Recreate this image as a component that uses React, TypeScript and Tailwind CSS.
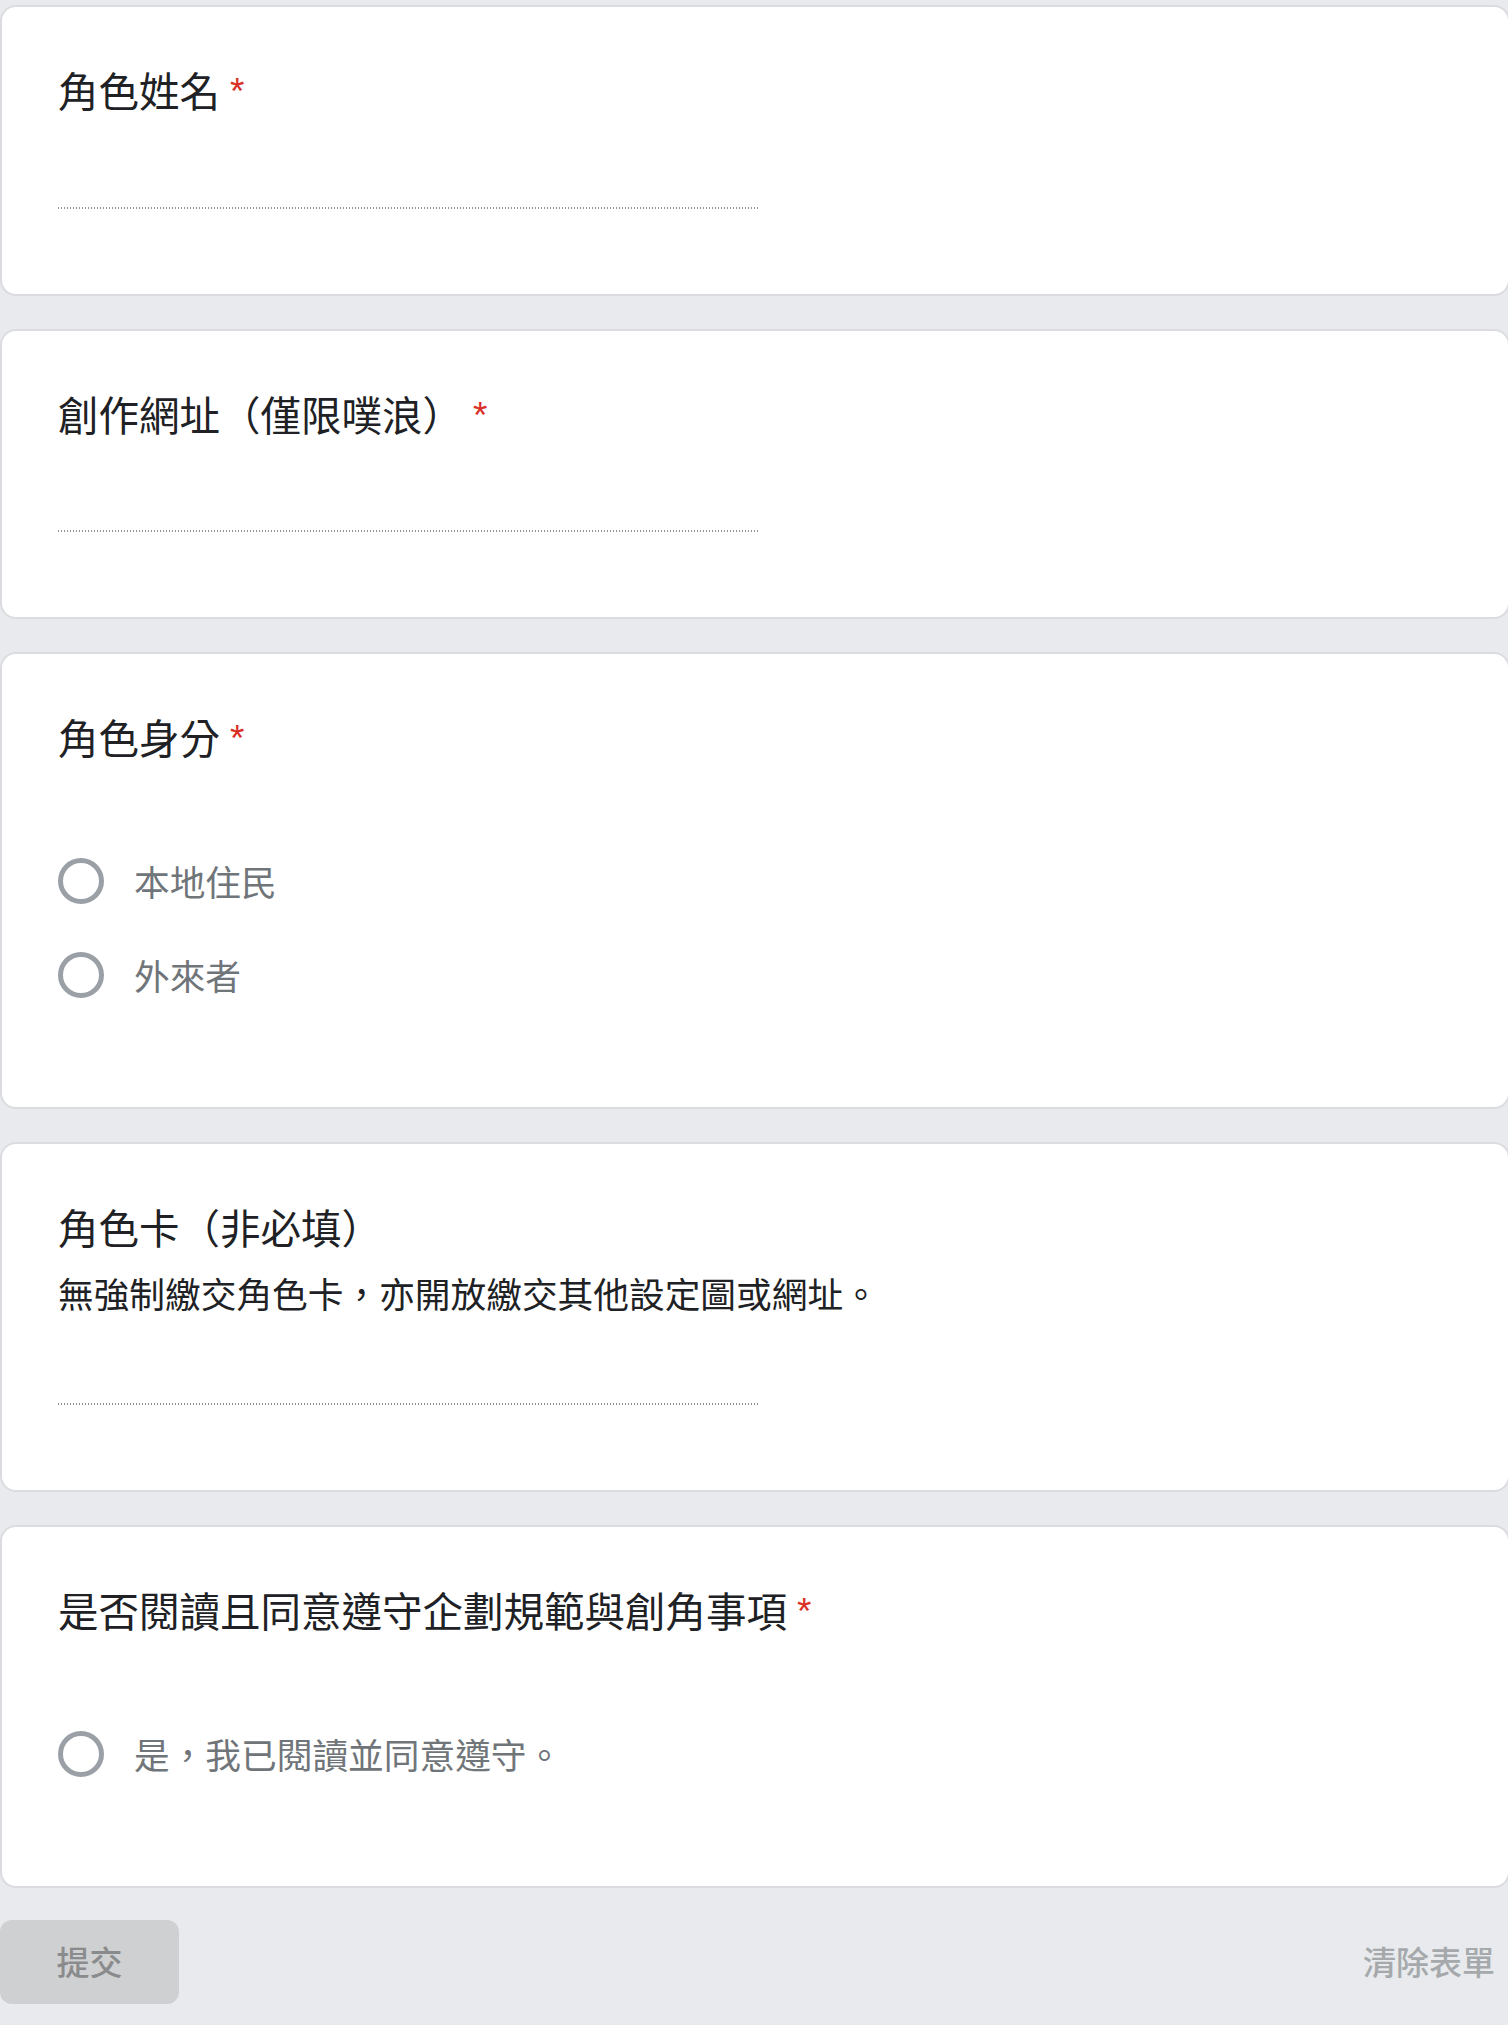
import React from "react";

const FONT = { fontFamily: '"Noto Sans CJK TC", "Noto Sans", sans-serif' };

function Title({ text, required }: { text: string; required?: boolean }) {
  return (
    <div className="text-[40.5px] leading-[48px] text-[#202124] whitespace-nowrap">
      {text}
      {required && (
        <span className="text-[#d93025] text-[37px] align-top pl-[10px] relative top-[2px]" style={{ fontFamily: '"Liberation Sans", sans-serif' }}>*</span>
      )}
    </div>
  );
}

function Card({ children }: { children: React.ReactNode }) {
  return (
    <div className="bg-white border-2 border-[#dadce0] rounded-[16px] mr-[-2px] pl-[56px] pr-[56px] pt-[59px] pb-[85px]">
      {children}
    </div>
  );
}

function TextInput({ h }: { h: string }) {
  return (
    <div className={`${h} flex items-end`}>
      <div className="w-[700px] h-[2px] bg-[linear-gradient(to_right,#8e9296_50%,transparent_50%)] bg-[length:3px_2px]" />
    </div>
  );
}

function Radio({ label }: { label: string }) {
  return (
    <div className="h-[94px] flex items-center">
      <div className="w-[46px] h-[46px] rounded-full border-[5px] border-[#9aa0a6] shrink-0" />
      <div className="ml-[30px] text-[35.7px] leading-[44px] text-[#70757a] whitespace-nowrap">{label}</div>
    </div>
  );
}

export default function App() {
  return (
    <div className="w-[1508px] min-h-[2025px] bg-[#e8eaed] pt-[5px] overflow-hidden" style={FONT}>
      <div className="flex flex-col gap-[33px]">
        <Card>
          <Title text="角色姓名" required />
          <TextInput h="h-[95px]" />
        </Card>
        <Card>
          <Title text="創作網址（僅限噗浪）" required />
          <TextInput h="h-[94px]" />
        </Card>
        <Card>
          <Title text="角色身分" required />
          <div className="mt-[73px]">
            <Radio label="本地住民" />
            <Radio label="外來者" />
          </div>
        </Card>
        <Card>
          <Title text="角色卡（非必填）" />
          <div className="mt-[20px] text-[35.7px] leading-[44px] text-[#202124] whitespace-nowrap">
            無強制繳交角色卡，亦開放繳交其他設定圖或網址。
          </div>
          <TextInput h="h-[90px]" />
        </Card>
        <Card>
          <Title text="是否閱讀且同意遵守企劃規範與創角事項" required />
          <div className="mt-[73px]">
            <Radio label="是，我已閱讀並同意遵守。" />
          </div>
        </Card>
      </div>
      <div className="mt-[32px] flex items-center justify-between pr-[13px]">
        <div className="w-[179px] h-[84px] rounded-[12px] bg-[#cfd0d1] flex items-center justify-center text-[33px] font-medium text-[#8a8b8c]">
          提交
        </div>
        <div className="text-[33px] font-medium text-[#a6a9ac]">清除表單</div>
      </div>
    </div>
  );
}
